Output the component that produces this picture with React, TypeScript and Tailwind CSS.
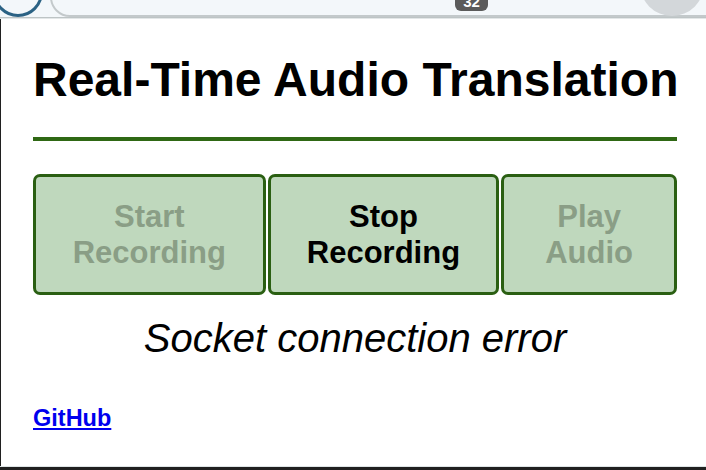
export default function App() {
  return (
    <div className="w-[706px] h-[470px] flex flex-col bg-[#202020] overflow-hidden font-['Liberation_Sans',Arial,sans-serif]">
      {/* browser chrome, cut off at the top */}
      <div className="h-[17px] shrink-0 flex items-end bg-[#f3f7fa] overflow-hidden">
        <div className="w-[50px] h-[50px] -ml-[7px] shrink-0 rounded-full border-[3px] border-[#2b6284] bg-[#f3f7fa]" />
        <div className="ml-[7px] -mr-[30px] flex-1 h-[40px] rounded-[22px] border-2 border-[#c3c9cb] flex items-end">
          <div className="ml-[403px] mb-[4px] w-[33px] h-[24px] rounded-md bg-[#5b5b5b] flex items-end justify-center text-white text-[15px] font-bold leading-none pb-[2px]">
            32
          </div>
          <div className="ml-[152px] -mb-[1px] w-[64px] h-[64px] rounded-full bg-[#d3d7da]" />
        </div>
      </div>
      <div className="h-px shrink-0 bg-[#bdc4c5]" />
      <div className="h-px shrink-0 bg-[#e3e7e8]" />

      {/* page */}
      <div className="flex-1 bg-white border-l border-[#202020] pl-[32px] pr-[29px] pt-[33px]">
        <h1 className="text-[48px] font-bold text-black leading-[55px] whitespace-nowrap">
          Real-Time Audio Translation
        </h1>
        <div className="mt-[30px] h-[4px] w-[644px] bg-[#2f6814]" />

        <div className="mt-[33px] flex gap-[2px]">
          <button
            disabled
            className="w-[233px] h-[121px] rounded-[7px] border-[3px] border-[#2a5f12] bg-[#bfd8bd] text-[#8a9e86] text-[31px] font-bold leading-[36px] flex items-center justify-center text-center"
          >
            Start
            <br />
            Recording
          </button>
          <button className="w-[232px] h-[121px] rounded-[7px] border-[3px] border-[#2a5f12] bg-[#bfd8bd] text-black text-[31px] font-bold leading-[36px] flex items-center justify-center text-center">
            Stop
            <br />
            Recording
          </button>
          <button
            disabled
            className="w-[176px] h-[121px] rounded-[7px] border-[3px] border-[#2a5f12] bg-[#bfd8bd] text-[#8a9e86] text-[31px] font-bold leading-[36px] flex items-center justify-center text-center"
          >
            Play
            <br />
            Audio
          </button>
        </div>

        <p className="mt-[20px] w-[644px] text-center italic text-[40px] leading-[46px] text-black">
          Socket connection error
        </p>

        <a href="#" className="mt-[44px] inline-block text-[23.5px] font-bold text-[#0000ee] underline leading-[27px]">
          GitHub
        </a>
      </div>
      <div className="h-px shrink-0 bg-[#dfe5e6]" />
      <div className="h-[3px] shrink-0" />
    </div>
  );
}
